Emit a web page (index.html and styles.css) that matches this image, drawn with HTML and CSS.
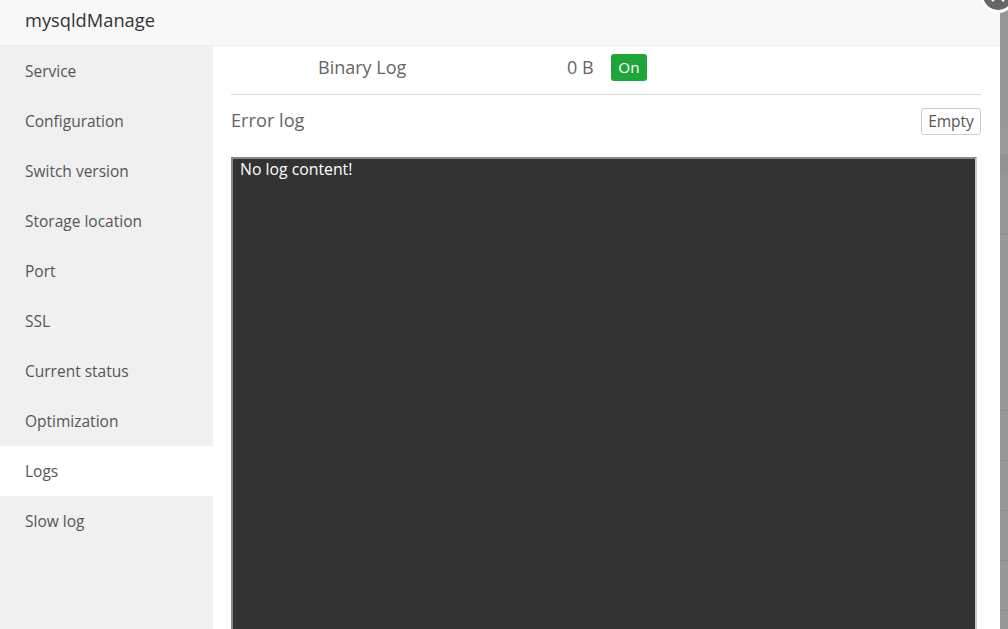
FILE: index.html
```html
<!DOCTYPE html>
<html lang="en">
<head>
<meta charset="utf-8">
<title>mysqldManage</title>
<link rel="stylesheet" href="styles.css">
</head>
<body>
<div class="modal">
  <header class="modal-title">mysqldManage</header>
  <div class="modal-body">
    <nav class="side">
      <div class="side-item">Service</div>
      <div class="side-item">Configuration</div>
      <div class="side-item">Switch version</div>
      <div class="side-item">Storage location</div>
      <div class="side-item">Port</div>
      <div class="side-item">SSL</div>
      <div class="side-item">Current status</div>
      <div class="side-item">Optimization</div>
      <div class="side-item active">Logs</div>
      <div class="side-item">Slow log</div>
    </nav>
    <main class="content">
      <div class="bin-row">
        <span class="bin-label">Binary Log</span>
        <span class="bin-size">0 B</span>
        <span class="badge">On</span>
      </div>
      <div class="err-head">
        <span class="err-title">Error log</span>
        <button class="btn">Empty</button>
      </div>
      <div class="log-box">No log content!</div>
    </main>
  </div>
</div>
<div class="backdrop">
  <div class="seg seg-a"></div>
  <div class="seg seg-b"></div>
  <div class="seg seg-c"></div>
  <div class="seg seg-d"></div>
  <div class="seg seg-e"></div>
  <div class="seg seg-row"></div>
  <div class="seg seg-row"></div>
  <div class="seg seg-row"></div>
  <div class="seg seg-row"></div>
  <div class="seg seg-end"></div>
</div>
<div class="close">
  <svg class="close-x" viewBox="0 0 30 30" width="30" height="30" aria-hidden="true">
    <path d="M9 9 L21 21 M21 9 L9 21" stroke="#fff" stroke-width="2.5" fill="none"/>
  </svg>
</div>
</body>
</html>
```
FILE: styles.css
```css
* { box-sizing: border-box; }
html, body { margin: 0; height: 100%; overflow: hidden; }
body {
  display: flex;
  background: #999;
  font-family: "Open Sans", "Noto Sans", sans-serif;
  color: #555;
}
.backdrop { width: 8px; flex: none; height: 629px; overflow: hidden; }
.seg { border-bottom: 1px solid transparent; }
.seg-a { height: 128px; background: #969696; }
.seg-b { height: 26px; background: #9b9b9b; }
.seg-c { height: 19px; background: #929292; }
.seg-d { height: 62px; background: #969696; border-bottom-color: #8a8a8a; }
.seg-e { height: 176px; background: #999; border-bottom-color: #8c8c8c; }
.seg-row { height: 50px; background: #999; border-bottom-color: #8c8c8c; }
.seg-end { height: 18px; background: #999; }
.modal { width: 1000px; flex: none; height: 629px; background: #fff; overflow: hidden; }
.modal-title {
  height: 46px;
  padding-left: 25px;
  line-height: 39px;
  font-size: 18.3px;
  color: #333;
  background: #f8f8f8;
  border-bottom: 1px solid #eee;
}
.modal-body { display: flex; height: 583px; }
.side { width: 213px; flex: none; background: #f0f0f0; }
.side-item {
  height: 50px;
  line-height: 50px;
  padding-left: 25px;
  font-size: 15.5px;
  color: #555;
}
.side-item.active { background: #fff; }
.content { flex: 1; padding: 0 19px 0 18px; }
.bin-row {
  height: 49px;
  display: flex;
  align-items: flex-start;
  border-bottom: 1px solid #ddd;
  padding: 8px 0 0 87px;
  font-size: 18px;
  line-height: 27px;
  color: #666;
}
.bin-label { width: 249px; }
.bin-size { width: 44px; }
.badge {
  width: 36px;
  height: 27px;
  border-radius: 3px;
  background: #20a53a;
  color: #fff;
  font-size: 15.3px;
  line-height: 27px;
  text-align: center;
}
.err-head {
  display: flex;
  justify-content: space-between;
  align-items: center;
  height: 51px;
  font-size: 18.2px;
  color: #666;
}
.err-title { margin-top: -1px; }
.btn {
  width: 60px;
  height: 27px;
  padding: 0;
  margin-top: 1px;
  background: #fff;
  border: 1px solid #ccc;
  border-radius: 3px;
  font: 15.5px "Open Sans", "Noto Sans", sans-serif;
  color: #555;
}
.log-box {
  margin-top: 11px;
  width: 746px;
  height: 472px;
  padding: 0 7px;
  background: #333;
  border: 2px solid #888;
  border-bottom: 0;
  border-right-color: #ccc;
  color: #fff;
  font-size: 15.8px;
  line-height: 21px;
}
.close {
  position: absolute;
  top: -23px;
  left: 980px;
  width: 36px;
  height: 36px;
  border-radius: 50%;
  background: #666;
  border: 3px solid #fff;
}
.close-x { display: block; }
```
